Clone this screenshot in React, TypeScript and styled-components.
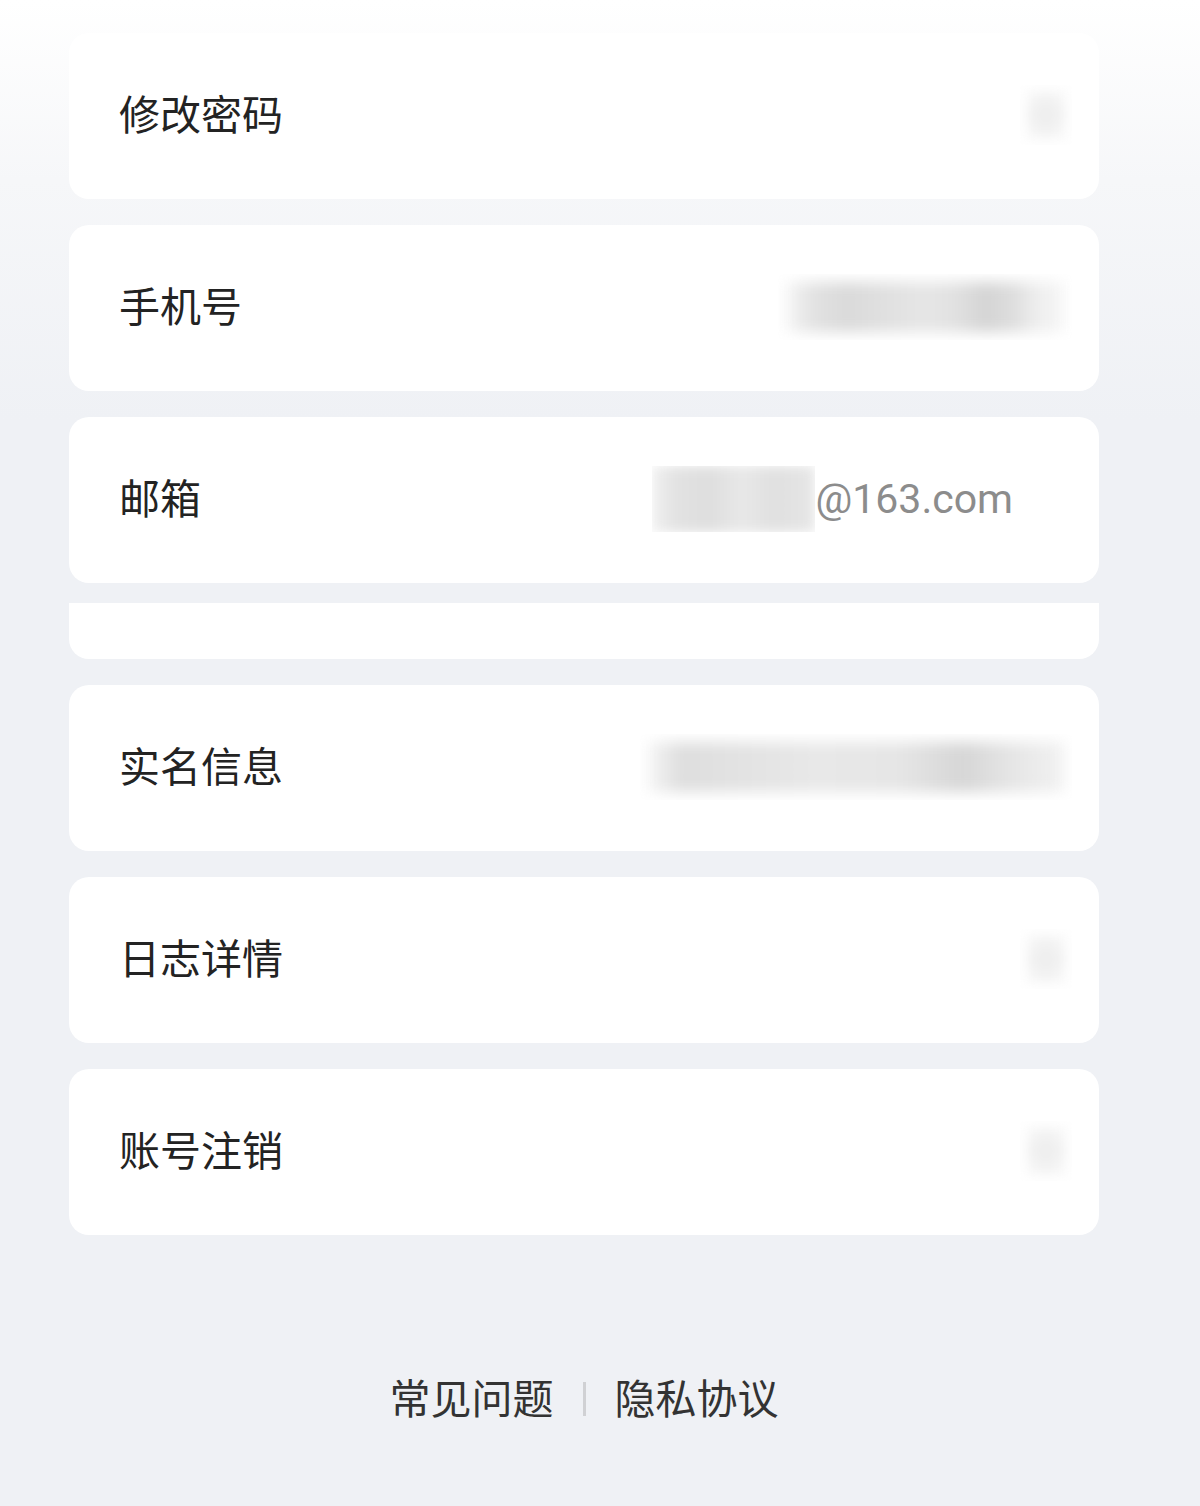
import React from "react";
import styled, { createGlobalStyle } from "styled-components";

const Global = createGlobalStyle`
  html, body { margin: 0; padding: 0; }
  body {
    background: linear-gradient(180deg, #ffffff 0px, #f6f7f9 180px, #eff1f5 420px, #eff1f5 100%);
    font-family: "Noto Sans CJK SC", "Noto Sans", sans-serif;
    min-height: 1506px;
  }
`;

const Page = styled.div`
  width: 1030px;
  margin-left: 69px;
  padding-top: 33px;
  display: flex;
  flex-direction: column;
`;

const List = styled.div`
  display: flex;
  flex-direction: column;
  gap: 26px;
`;

const Card = styled.div<{ $partial?: boolean }>`
  background: #ffffff;
  height: ${(p) => (p.$partial ? "56px" : "166px")};
  margin-top: ${(p) => (p.$partial ? "-6px" : "0")};
  border-radius: ${(p) => (p.$partial ? "0 0 20px 20px" : "20px")};
  display: flex;
  align-items: center;
  justify-content: space-between;
  padding: 0 27px 0 50px;
  box-sizing: border-box;
`;

const Label = styled.span`
  font-size: 41px;
  line-height: 56px;
  color: #232323;
  margin-top: -9px;
`;

const Right = styled.div<{ $pr?: number }>`
  display: flex;
  align-items: center;
  margin-top: -2px;
  padding-right: ${(p) => p.$pr ?? 0}px;
`;

const Blur = styled.div<{ $w: number; $h: number }>`
  width: ${(p) => p.$w}px;
  height: ${(p) => p.$h}px;
  overflow: hidden;
  position: relative;
`;

const BlurInner = styled.div<{ $strength: number; $bg: string; $inset: number }>`
  position: absolute;
  inset: ${(p) => p.$inset}px;
  background: ${(p) => p.$bg};
  filter: blur(${(p) => p.$strength}px);
`;

const Email = styled.span`
  font-family: Roboto, "Liberation Sans", sans-serif;
  font-size: 41px;
  color: #8c8c8c;
  line-height: 56px;
`;

const Footer = styled.div`
  margin-top: 133px;
  display: flex;
  justify-content: center;
  align-items: center;
`;

const FooterLink = styled.span`
  font-size: 41px;
  line-height: 56px;
  color: #333333;
`;

const Sep = styled.span`
  width: 3px;
  height: 34px;
  background: #d0d1d4;
  margin: 6px 29px 0 29px;
`;

const squareBg = "radial-gradient(closest-side, #ececec, #f3f3f3 70%, #fafafa)";
const phoneBg =
  "linear-gradient(90deg, #f6f6f6 0%, #e2e2e2 10%, #dadada 22%, #e0e0e0 35%, #e6e6e6 50%, #e2e2e2 60%, #d4d4d4 72%, #dedede 82%, #eeeeee 90%, #f6f6f6 100%)";
const idBg =
  "linear-gradient(90deg, #f6f6f6 0%, #dedede 8%, #e2e2e2 20%, #e8e8e8 40%, #e6e6e6 60%, #d6d6d6 76%, #e4e4e4 86%, #f2f2f2 100%)";
const emailBg =
  "linear-gradient(90deg, #f0f0f0 0%, #e2e2e2 15%, #dedede 35%, #e8e8e8 55%, #e0e0e0 75%, #e6e6e6 100%)";

const SmallBlur = () => (
  <Blur $w={52} $h={60}>
    <BlurInner $strength={5} $bg={squareBg} $inset={4} />
  </Blur>
);

export default function App() {
  return (
    <>
      <Global />
      <Page>
        <List>
          <Card>
            <Label>修改密码</Label>
            <Right>
              <SmallBlur />
            </Right>
          </Card>
          <Card>
            <Label>手机号</Label>
            <Right>
              <Blur $w={294} $h={66}>
                <BlurInner $strength={7} $bg={phoneBg} $inset={8} />
              </Blur>
            </Right>
          </Card>
          <Card>
            <Label>邮箱</Label>
            <Right $pr={59}>
              <Blur $w={163} $h={66}>
                <BlurInner $strength={6} $bg={emailBg} $inset={0} />
              </Blur>
              <Email>@163.com</Email>
            </Right>
          </Card>
          <Card $partial />
          <Card>
            <Label>实名信息</Label>
            <Right>
              <Blur $w={432} $h={66}>
                <BlurInner $strength={7} $bg={idBg} $inset={8} />
              </Blur>
            </Right>
          </Card>
          <Card>
            <Label>日志详情</Label>
            <Right>
              <SmallBlur />
            </Right>
          </Card>
          <Card>
            <Label>账号注销</Label>
            <Right>
              <SmallBlur />
            </Right>
          </Card>
        </List>
        <Footer>
          <FooterLink>常见问题</FooterLink>
          <Sep />
          <FooterLink>隐私协议</FooterLink>
        </Footer>
      </Page>
    </>
  );
}
